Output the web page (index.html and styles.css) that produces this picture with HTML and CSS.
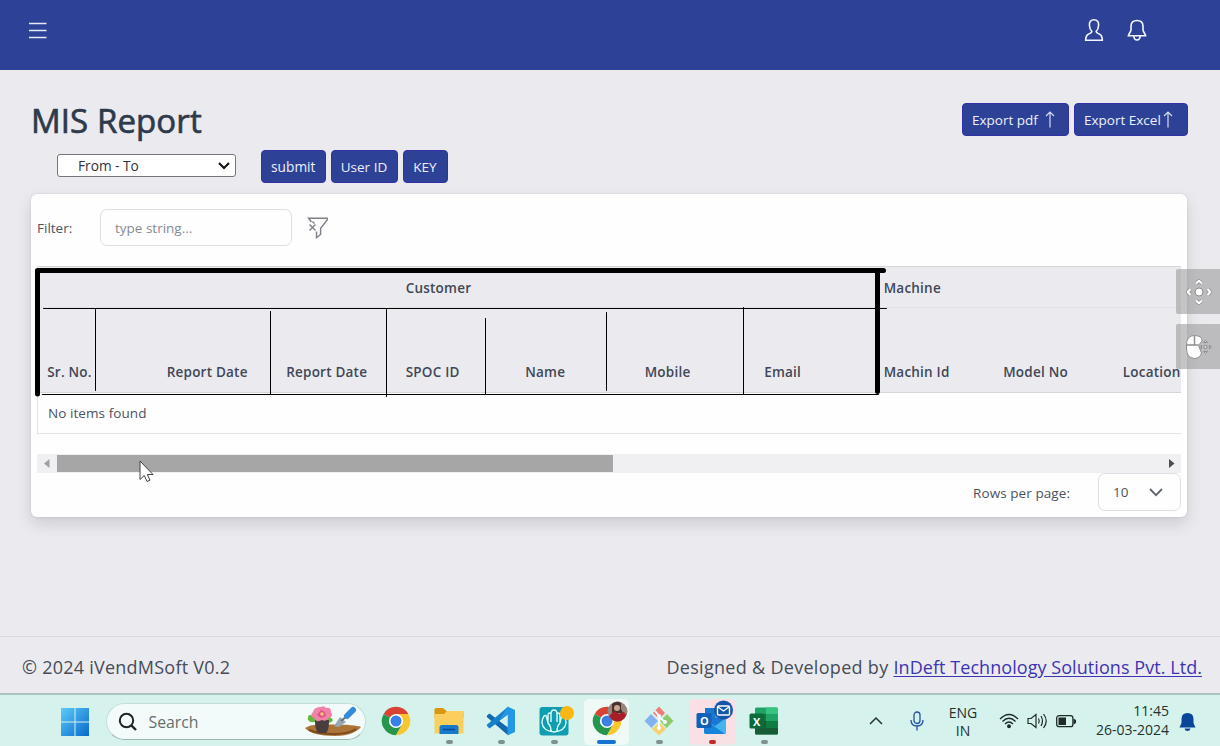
FILE: index.html
```html
<!DOCTYPE html>
<html lang="en">
<head>
<meta charset="utf-8">
<title>MIS Report</title>
<link rel="stylesheet" href="styles.css">
</head>
<body>
<div class="screen">
  <header class="navbar">
    <svg class="menu-icon" width="18" height="17" viewBox="0 0 18 17"><path d="M0 1.5h17.5M0 8.500h17.500M0 15.500h17.500" stroke="#e6e9f5" stroke-width="1.700"/></svg>
    <div class="nav-actions">
      <svg width="20" height="24" viewBox="0 0 20 24" fill="none" stroke="#f4f6ff" stroke-width="1.600"><path d="M10 1.700C6.700 1.700 5.200 4 5.400 7.200C5.500 9.700 6.300 12 7.900 13.300C7.900 15 6.500 15.200 4.700 16C2.200 17 1.700 18.500 1.700 22.300H18.300C18.300 18.500 17.800 17 15.300 16C13.500 15.200 12.100 15 12.100 13.300C13.700 12 14.500 9.700 14.600 7.200C14.800 4 13.300 1.700 10 1.700Z"/></svg>
      <svg width="20" height="24" viewBox="0 0 20 24" fill="none" stroke="#f4f6ff" stroke-width="1.600"><path d="M10 2.500C6.200 2.500 4.100 4.900 4 8V12C4 13.500 1.800 15.400 1.400 17.700H18.600C18.200 15.400 16 13.500 16 12V8C15.900 4.900 13.800 2.500 10 2.500ZM6.800 18C7 20.600 8.200 22 10 22S13 20.600 13.200 18"/></svg>
    </div>
  </header>

  <main class="main">
    <div class="title-row">
      <h1 class="title">MIS Report</h1>
      <div class="exports">
        <button class="btn btn-pdf">Export pdf <svg width="10" height="17" viewBox="0 0 10 17"><path d="M5 16.500V1.200M1 5L5 1L9 5" fill="none" stroke="#d5dbf3" stroke-width="1.200"/></svg></button>
        <button class="btn btn-excel">Export Excel<svg width="10" height="17" viewBox="0 0 10 17"><path d="M5 16.500V1.200M1 5L5 1L9 5" fill="none" stroke="#d5dbf3" stroke-width="1.200"/></svg></button>
      </div>
    </div>
    <div class="controls">
      <div class="range"><span>From - To</span><svg width="12" height="8" viewBox="0 0 12 8"><path d="M1 1L6 6L11 1" fill="none" stroke="#111" stroke-width="2"/></svg></div>
      <button class="btn btn-submit">submit</button>
      <button class="btn btn-user">User ID</button>
      <button class="btn btn-key">KEY</button>
    </div>

    <section class="card">
      <div class="filter">
        <span class="filter-label">Filter:</span>
        <div class="filter-input">type string...</div>
        <svg class="funnel" width="22" height="22" viewBox="0 0 22 22" fill="none" stroke="#7c7f86" stroke-width="1.400"><path d="M4.500 5L1.500 1.200H20.200V3L13.600 11.200V17.500L9.500 20.500V14.500M2.500 7.500L8.500 13.500M8.500 7.500L2.500 13.500M5.500 4.500L7.500 6.500"/></svg>
      </div>
      <div class="table">
        <div class="row group-row"><b class="customer">Customer</b><b class="machine">Machine</b></div>
        <div class="row head-row"><b>Sr. No.</b><b>Report Date</b><b>Report Date</b><b>SPOC ID</b><b>Name</b><b>Mobile</b><b>Email</b><b>Machin Id</b><b>Model No</b><b>Location</b></div>
        <div class="empty-row">No items found</div>
      </div>
      <div class="scrollbar">
        <svg width="20" height="19" viewBox="0 0 20 19"><path d="M12.500 5V14L7 9.500Z" fill="#a0a0a0"/></svg>
        <div class="thumb"></div>
        <svg width="20" height="19" viewBox="0 0 20 19"><path d="M8 5V14L13.500 9.500Z" fill="#4d4d4d"/></svg>
      </div>
      <div class="pager">
        <span>Rows per page:</span>
        <div class="page-size">10<svg width="14" height="9" viewBox="0 0 14 9"><path d="M1 1L7 7.200L13 1" fill="none" stroke="#5f6470" stroke-width="1.800"/></svg></div>
      </div>
    </section>
  </main>

  <footer class="footer">
    <span class="copyright">© 2024 iVendMSoft V0.2</span>
    <span class="credit">Designed &amp; Developed by <a href="#">InDeft Technology Solutions Pvt. Ltd.</a></span>
  </footer>

  <div class="taskbar">
    <svg class="start" width="28" height="28" viewBox="0 0 28 28"><defs><linearGradient id="win" x1="0" y1="0" x2="28" y2="28" gradientUnits="userSpaceOnUse"><stop stop-color="#5cccf7"/><stop offset="1" stop-color="#0868cd"/></linearGradient></defs><path d="M0 0H13.500V13.500H0ZM14.500 0H28V13.500H14.500ZM0 14.500H13.500V28H0ZM14.500 14.500H28V28H14.500Z" fill="url(#win)"/></svg>
    <div class="search">
      <svg width="20" height="20" viewBox="0 0 20 20" fill="none" stroke="#1e2426"><circle cx="8.500" cy="8.500" r="6.700" stroke-width="2"/><path d="M13.300 13.300L18 18" stroke-width="2.400"/></svg>
      <span>Search</span>
      <svg class="garden" width="58" height="31" viewBox="0 0 58 31"><path d="M1 22C5 19 12 18 20 19C32 18 52 19 57 21C54 25 46 30 31 30C16 30 5 27 1 22Z" fill="#ad7439"/><path d="M5 24C20 30 43 29 52 23" fill="none" stroke="#7d4b1c" stroke-width="2"/><path d="M11 16C3 17 3 12 5 9C10 9 13 12 13 15ZM21 15C22 9 27 11 29 14C27 18 22 17 20 16Z" fill="#62b83c"/><path d="M11 14H25C25 22 24 25 22 27H14C12 24 11 21 11 14Z" fill="#4a3d3e"/><path d="M17 1Q20-1 22 2Q27 1 27 6Q30 10 25 12Q22 16 18 14Q12 17 10 12Q5 10 9 6Q10 1 17 1Z" fill="#ef83a8"/><path d="M17 4L21 6L22 10L17 12L13 9Z" fill="#df5389"/><circle cx="18" cy="8" r="1.800" fill="#f6ca6c"/><path d="M36 11L42 16L35 21L30 20Z" fill="#99a7b3"/><path d="M37 15L43 10" stroke="#63717c" stroke-width="2"/><path d="M43 10L49 4" stroke="#348bdd" stroke-width="6" stroke-linecap="round"/></svg>
    </div>
    <div class="apps">
      <div class="app"><svg width="30" height="30" viewBox="0 0 30 30"><path d="M15 15L2.700 7.900A14.200 14.200 0 0 1 27.300 7.900H15Z" fill="#d84334"/><path d="M15 15L2.700 7.900A14.200 14.200 0 0 0 15 29.200L21.200 18.500Z" fill="#27964d"/><path d="M15 7.900H27.300A14.200 14.200 0 0 1 15 29.200L21.200 18.500Z" fill="#f8c72e"/><circle cx="15" cy="15" r="7.100" fill="#fff"/><circle cx="15" cy="15" r="5.500" fill="#397fe5"/></svg></div>
      <div class="app open"><svg width="30" height="30" viewBox="0 0 30 30"><path d="M0.500 3.500Q0.500 2 2 2H9L12.500 5H28Q29.500 5 29.500 7V12H0.500Z" fill="#d9980e"/><path d="M0.500 8H10L13 5H28Q29.500 5 29.500 7V27.500H0.500Z" fill="#fbcf5d"/><path d="M5.500 28V21.500Q5.500 19 8 19H22Q24.500 19 24.500 21.500V28Z" fill="#1679ca"/><path d="M9 23.500H21" stroke="#0a4b94" stroke-width="1.500"/></svg></div>
      <div class="app open"><svg width="30" height="30" viewBox="0 0 30 30"><path d="M1 9.500L3.500 7.500L23 22V29L20.500 28L0.800 11Z" fill="#1269ad"/><path d="M1 20L3.500 22.500L23 8V1L20.500 2L0.800 18.700Z" fill="#1681cb"/><path d="M21.500 0.500L29 4V26L21.500 29.500V9L13 15Z" fill="#2497e5"/><path d="M21.500 9V21L13.500 15Z" fill="#d5f3ec"/></svg></div>
      <div class="app open"><svg width="36" height="30" viewBox="0 0 36 30" class="hand"><rect x="0.500" y="1" width="29" height="28.500" rx="3" fill="#119db0"/><path d="M9 17L7.500 11Q7 8.500 5 10Q3 13 3 17Q4 25 15 26Q26 25 27 17Q27 13 25 10Q23 8.500 22.500 11L21 17V9Q20.500 6 18 7.500V16M18 8Q18 4 15 4Q12 4 12 8V16M12 7.500Q9.500 6 9 9V17Q12 20 12 25M21 17Q18 20 18 25" fill="none" stroke="#ddffff" stroke-width="1.400"/><circle cx="28" cy="7" r="7" fill="#fbb711"/></svg></div>
      <div class="app active"><svg width="36" height="34" viewBox="0 0 36 34" class="profile"><g transform="translate(0 4)"><path d="M15 15L2.700 7.900A14.200 14.200 0 0 1 27.300 7.900H15Z" fill="#d84334"/><path d="M15 15L2.700 7.900A14.200 14.200 0 0 0 15 29.200L21.200 18.500Z" fill="#27964d"/><path d="M15 7.900H27.300A14.200 14.200 0 0 1 15 29.200L21.200 18.500Z" fill="#f8c72e"/><circle cx="15" cy="15" r="7.100" fill="#fff"/><circle cx="15" cy="15" r="5.500" fill="#397fe5"/></g><circle cx="25.500" cy="9.500" r="10" fill="#97867a"/><path d="M20 2Q25-2 29 1V7L31 11H20Z" fill="#44332f"/><circle cx="25" cy="6" r="3" fill="#cda58d"/><path d="M17 14L22 9L27 12L32 10L34 13Q31 20 25 19.500Q20 19 17 14Z" fill="#a81d29"/></svg></div>
      <div class="app open"><svg width="30" height="30" viewBox="0 0 30 30"><path d="M15 0.500L21 7L15 13L9 7Z" fill="#ee7c75"/><path d="M7 8L14 15L7.500 22L0.500 15Z" fill="#83b2ef"/><path d="M23 8L29.500 15L22.500 22L16 15Z" fill="#8dcc6a"/><path d="M15 16L22 23L15 29.500L8 23Z" fill="#f6d171"/><path d="M11 5L15 10V22M15 11L21 16" fill="none" stroke="#f4fffb" stroke-width="2"/><circle cx="15" cy="10" r="2" fill="#fff"/><circle cx="21" cy="16" r="2" fill="#fff"/><circle cx="15" cy="22" r="2" fill="#fff"/></svg></div>
      <div class="app alert"><svg width="38" height="36" viewBox="0 0 38 36" class="outlook"><path d="M9 8H29V30H9Z" fill="#1b77cf"/><path d="M19 8H29V18H19Z" fill="#2f9aea"/><path d="M8 19L19 26L30 18V33Q30 34 28 34H10Q8 34 8 32Z" fill="#45b3ee"/><path d="M8 19L29 34H10Q8 34 8 32Z" fill="#1685d8"/><rect x="0.500" y="13" width="15" height="15" rx="1.500" fill="#0f62b8"/><text x="4" y="25" class="office-letter">O</text><circle cx="27.500" cy="10" r="9.500" fill="#1557a7"/><rect x="21.500" y="6" width="12" height="9" rx="1" fill="none" stroke="#fff" stroke-width="1.400"/><path d="M22 7L27.500 11L33 7" fill="none" stroke="#fff" stroke-width="1.300"/></svg></div>
      <div class="app open"><svg width="30" height="28" viewBox="0 0 30 28"><rect x="6" y="0.500" width="23" height="27" rx="1.500" fill="#21a366"/><path d="M6 7H17V14H6Z" fill="#107c41"/><path d="M17 0.500H28Q29 .500 29 2V7H17Z" fill="#37c481"/><path d="M17 14H29V21H17Z" fill="#107c41"/><path d="M6 14H17V21H29V26Q29 27.500 28 27.500H7Q6 27.500 6 26Z" fill="#185c37"/><rect x="0.500" y="6.500" width="15" height="15" rx="1.500" fill="#0c6b3b"/><text x="4" y="18.500" class="office-letter">X</text></svg></div>
    </div>
    <div class="tray">
      <svg class="chevron" width="14" height="9" viewBox="0 0 14 9"><path d="M1 8L7 2L13 8" fill="none" stroke="#273331" stroke-width="1.500"/></svg>
      <svg class="mic" width="14" height="20" viewBox="0 0 14 20" fill="none" stroke="#2450a6" stroke-width="1.300"><rect x="4" y="1" width="6" height="11.500" rx="3"/><path d="M1 9Q1 15 7 15Q13 15 13 9M7 15V19.500"/></svg>
      <div class="language">ENG<br>IN</div>
      <svg class="wifi" width="20" height="16" viewBox="0 0 20 16" fill="none" stroke="#1f2b29" stroke-width="1.300"><path d="M1 6Q10-3 19 6M3.500 8.500Q10 2 16.500 8.500M6 11Q10 7 14 11"/><circle cx="10" cy="13.300" r="1.300" fill="#1f2b29"/></svg>
      <svg class="sound" width="21" height="16" viewBox="0 0 21 16" fill="none" stroke="#1f2b29" stroke-width="1.200"><path d="M1 5.500H4L9 1.500V14.500L4 10.500H1ZM11.500 5.500Q13 8 11.500 10.500M14 3Q17 8 14 13M16.500 1Q22 8 16.500 15"/></svg>
      <svg class="battery" width="20" height="13" viewBox="0 0 20 13"><rect x="0.700" y="0.700" width="16.200" height="11" rx="2.300" fill="none" stroke="#1f2b29" stroke-width="1.300"/><path d="M2.500 2.500H10V10H2.500Z" fill="#1f2b29"/><path d="M17.500 3.500L20 5V8L17.500 9.500Z" fill="#1f2b29"/></svg>
      <div class="clock">11:45<br>26-03-2024</div>
      <svg class="notice" width="17" height="20" viewBox="0 0 17 20"><path d="M8.500 1Q14.500 1 14.500 7V11L16.500 15.500H.500L2.500 11V7Q2.500 1 8.500 1ZM5.500 16.500H11.500Q11 19 8.500 19Q6 19 5.500 16.500Z" fill="#0b4598"/></svg>
    </div>
  </div>

  <svg class="ink" width="1220" height="746" viewBox="0 0 1220 746" fill="none" stroke="#000" stroke-linecap="round">
    <path d="M37.500 270.500V394M37.500 270.500H883.500M877.500 270.500V391.500" stroke-width="5"/>
    <path d="M43.500 308.500H886.500M42.500 394.500H878.500M95.500 309.500V390.500M270.500 311.500V394.500M386.500 309.500V396.500M485.500 318.500V394.500M606.500 312.500V390.500M743.500 307.500V394.500" stroke-width="1"/>
  </svg>
  <div class="side-tools">
    <div class="tool"><svg width="26" height="26" viewBox="0 0 26 26" fill="none" stroke-linejoin="round"><circle cx="13" cy="13" r="4" fill="#fff" stroke="#8f8f91"/><g stroke="#8f8f91" stroke-width="3.600"><path d="M10 4.500L13 1.800L16 4.500M10 21.500L13 24.200L16 21.500M4.500 10L1.800 13L4.500 16M21.500 10L24.200 13L21.500 16"/></g><g stroke="#fff" stroke-width="2"><path d="M10 4.500L13 1.800L16 4.500M10 21.500L13 24.200L16 21.500M4.500 10L1.800 13L4.500 16M21.500 10L24.200 13L21.500 16"/></g></svg></div>
    <div class="tool"><svg width="28" height="26" viewBox="0 0 28 26" stroke="#8f8f91"><path d="M.500 11Q.500 1.500 8.500 1.500Q16 1.500 16 7L12.500 11.500L15.500 19Q14 24.500 8.500 24.500Q.500 24 .500 14Z" fill="#fff"/><path d="M.500 11H12.500M8.500 2V11" fill="none" stroke-width="1.500"/><circle cx="19.500" cy="13" r="1.800" fill="#ccc"/><path d="M17.500 8.500L19.500 6.500L21.500 8.500ZM17.500 17.500L19.500 19.500L21.500 17.500ZM15.500 11L13.500 13L15.500 15ZM23.500 11L25.500 13L23.500 15Z" fill="#ccc"/></svg></div>
  </div>
  <svg class="cursor" width="15" height="23" viewBox="0 0 15 23"><path d="M1 1V19.500L5.300 15.500L8 21.500L11 20.200L8.300 14.500H14Z" fill="#fff" stroke="#404040"/></svg>
</div>
</body>
</html>
```
FILE: styles.css
```css
* { box-sizing: border-box; }
body { margin: 0; font-family: "Open Sans", "Noto Sans", sans-serif; color: #4d5261; }
svg { display: block; flex: none; overflow: visible; }
.screen { position: relative; display: flex; flex-direction: column; width: 1220px; height: 746px; overflow: hidden; background: #ebebef; }
.navbar { flex: none; display: flex; align-items: flex-start; justify-content: space-between; height: 70px; padding: 18px 73px 0 29px; background: #2d4296; }
.menu-icon { margin-top: 3.500px; }
.nav-actions { display: flex; gap: 23px; }
.main { flex: 1; padding: 30px 33px 0 31px; }
.title-row { display: flex; justify-content: space-between; height: 50px; }
.title { margin: 0; color: #2e3a4c; font-size: 33px; line-height: 42px; font-weight: 400; letter-spacing: .1px; -webkit-text-stroke: .7px #2e3a4c; white-space: nowrap; }
.exports { display: flex; gap: 5px; padding: 3px 0 0; margin-right: -1px; }
.btn { display: flex; align-items: center; height: 33px; padding: 0 9px; border: 1px solid #332fa4; border-radius: 4px; background: #2d4296; color: #edf0fc; font: 13.500px "Open Sans", sans-serif; white-space: nowrap; }
.btn-pdf { width: 107px; justify-content: space-between; padding-right: 13px; }
.btn-excel { width: 114px; gap: 2px; }
.controls { display: flex; gap: 5px; height: 44px; padding-left: 26px; }
.controls .btn { justify-content: center; padding: 0; }
.controls .btn-submit { width: 64.500px; margin-left: 20px; font-size: 13.700px; }
.btn-user { width: 67px; }
.btn-key { width: 45px; }
.range { display: flex; align-items: center; justify-content: space-between; width: 179px; height: 23px; margin-top: 4px; padding: 0 5px 0 20px; border: 1px solid #74767b; border-radius: 3px; background: #fff; color: #30333b; font-size: 13.700px; }
.card { width: 1156px; height: 323px; padding: 15px 6px 0; border-radius: 6px; background: #fefefe; box-shadow: 0 7px 15px rgba(25, 25, 45, .15), 0 0 2px rgba(25, 25, 45, .15); font-size: 13.500px; }
.filter { display: flex; align-items: center; height: 37px; }
.filter-label { width: 63px; }
.filter-input { width: 192px; height: 37px; padding-left: 14px; border: 1px solid #dedfe5; border-radius: 7px; color: #878a92; line-height: 36px; }
.funnel { margin-left: 15px; }
.table { height: 168px; margin-top: 20px; overflow: hidden; border-left: 1px solid #e2e2e6; }
.row { display: grid; grid-template-columns: repeat(10, 119.500px); background: #ebebef; color: #404756; white-space: nowrap; }
.row b { padding-left: 9.200px; font-weight: 600; letter-spacing: .22px; }
.group-row { height: 42px; border-top: 1px solid #d6d6d9; border-bottom: 1px solid #e0e1e5; line-height: 42px; }
.customer { grid-column: 4; }
.machine { grid-column: 8; }
.head-row { height: 85px; padding-top: 54px; border-bottom: 1px solid #d6d6d9; line-height: 21px; }
.empty-row { height: 41px; padding-left: 10px; border-bottom: 1px solid #e4e4e7; line-height: 41px; letter-spacing: .07px; }
.scrollbar { display: flex; height: 19px; margin-top: 20px; background: #f0f0f2; }
.thumb { width: 556px; height: 17px; margin: 1px auto 0 0; background: #a6a6a6; }
.pager { display: flex; justify-content: flex-end; gap: 28px; height: 38px; line-height: 41px; letter-spacing: .07px; }
.page-size { display: flex; align-items: center; justify-content: space-between; width: 83px; height: 38px; padding: 0 17px 0 14px; border: 1px solid #dedfe5; border-radius: 7px; }
.footer { flex: none; display: flex; justify-content: space-between; height: 57px; padding: 0 18px 0 22px; border-top: 1px solid #d9dade; line-height: 60px; font-size: 18px; color: #464c58; white-space: nowrap; }
.copyright { letter-spacing: .24px; }
.credit { letter-spacing: .3px; }
.footer a { color: #3b35b4; letter-spacing: .06px; text-underline-offset: 2px; }
.taskbar { flex: none; display: flex; height: 53px; border-top: 2px solid #aec4c0; background: #d5f3ec; color: #26312f; }
.start { margin: 13px 17px 0 60.500px; }
.search { display: flex; align-items: center; width: 260.500px; height: 37px; margin-top: 8px; padding: 0 3px 0 11px; border: 1px solid #c2ddd7; border-bottom-color: #9cb5b0; border-radius: 19px; background: #f2fbf9; color: #62706d; font-size: 15.800px; }
.search span { margin: 0 auto 0 11px; }
.apps { display: flex; margin-left: 4px; }
.app { position: relative; display: flex; align-items: center; justify-content: center; width: 52.600px; height: 51px; }
.app > svg { margin-top: 1px; }
.hand { margin-left: 6px; }
.app > .profile { margin: -3px 0 0 6px; z-index: 1; }
.app > .outlook { margin: -5px 0 0 6px; z-index: 1; }
.app::before { content: ""; position: absolute; }
.open::before, .active::after, .alert::after { content: ""; position: absolute; bottom: 2px; left: 23px; width: 7px; height: 4px; border-radius: 2px; background: #7e918d; }
.active::before, .alert::before { left: 4px; top: 4px; width: 45px; height: 46px; border-radius: 5px; background: #effaf7; }
.alert::before { left: 3px; width: 47px; background: #fae0e4; }
.active::after { left: 17px; width: 19px; background: #1574cf; }
.alert::after { background: #be2c2a; }
.office-letter { font: bold 11px "Open Sans", sans-serif; fill: #fff; }
.tray { display: flex; margin-left: auto; font-size: 14px; }
.chevron { margin: 21px 31px 0 0; }
.mic { margin: 16px 24px 0 0; }
.chevron + .mic { margin-left: -4px; }
.language { width: 30px; margin: 9px 21px 0 0; text-align: center; line-height: 18px; }
.wifi { margin: 18px 8px 0 0; }
.sound { margin: 18px 8px 0 0; }
.battery { margin: 20px 13px 0 0; }
.clock { width: 80px; margin: 6px 10px 0 0; text-align: right; line-height: 19px; white-space: nowrap; }
.notice { margin: 17px 24px 0 0; }
.ink { position: absolute; inset: 0; pointer-events: none; }
.side-tools { position: absolute; top: 269px; right: 0; display: flex; flex-direction: column; gap: 10px; }
.tool { display: flex; align-items: center; width: 44px; height: 45px; padding-left: 9.500px; background: rgba(150, 150, 152, .55); border-radius: 2px 0 0 2px; }
.cursor { position: absolute; left: 138.500px; top: 459.500px; }
```
